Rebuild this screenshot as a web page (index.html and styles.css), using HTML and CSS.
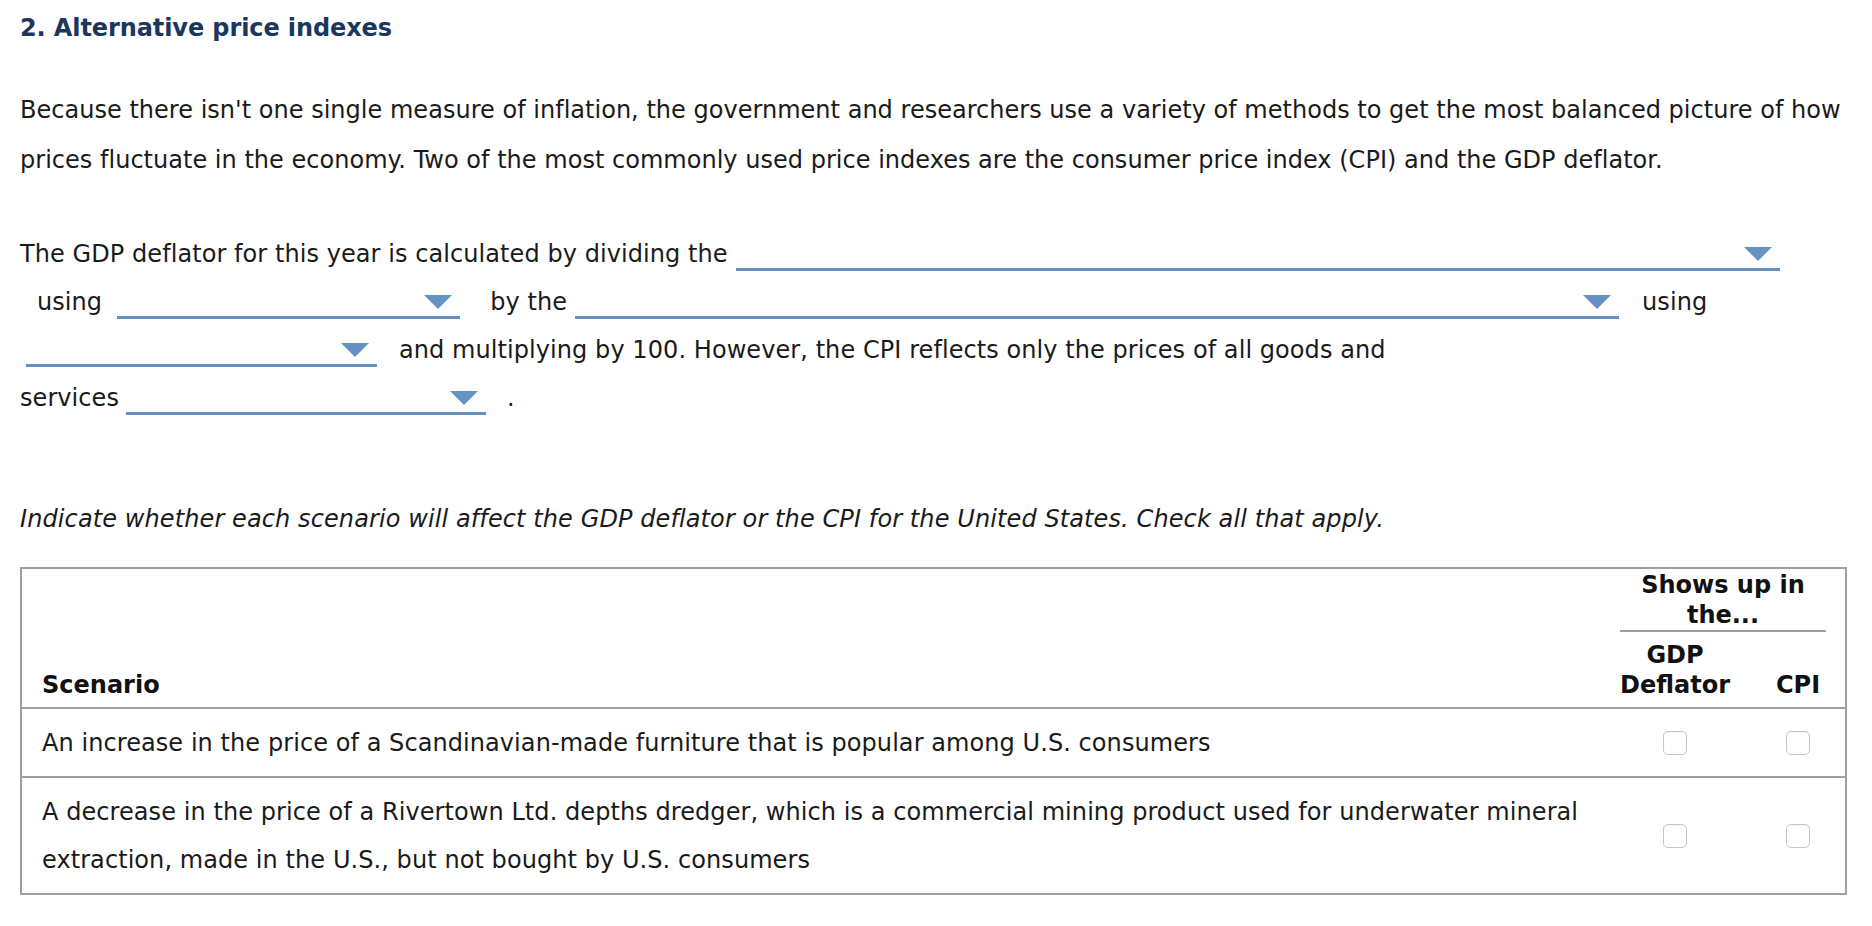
FILE: index.html
```html
<!DOCTYPE html>
<html lang="en">
<head>
<meta charset="utf-8">
<title>Alternative price indexes</title>
<link rel="stylesheet" href="styles.css">
</head>
<body>
<div class="page">
  <h2 class="title">2. Alternative price indexes</h2>
  <p class="intro">Because there isn't one single measure of inflation, the government and researchers use a variety of methods to get the most balanced picture of how prices fluctuate in the economy. Two of the most commonly used price indexes are the consumer price index (CPI) and the GDP deflator.</p>

  <div class="fill">
    <div class="fill-row">
      <span class="txt">The GDP deflator for this year is calculated by dividing the</span>
      <span class="dd dd-1"><span class="arrow"></span></span>
    </div>
    <div class="fill-row row-indent">
      <span class="txt">using</span>
      <span class="dd dd-2"><span class="arrow"></span></span>
      <span class="txt">by the</span>
      <span class="dd dd-3"><span class="arrow"></span></span>
      <span class="txt">using</span>
    </div>
    <div class="fill-row">
      <span class="dd dd-4"><span class="arrow"></span></span>
      <span class="txt">and multiplying by 100. However, the CPI reflects only the prices of all goods and</span>
    </div>
    <div class="fill-row">
      <span class="txt">services</span>
      <span class="dd dd-5"><span class="arrow"></span></span>
      <span class="txt">.</span>
    </div>
  </div>

  <p class="instruct">Indicate whether each scenario will affect the GDP deflator or the CPI for the United States. Check all that apply.</p>

  <div class="qtable">
    <div class="thead">
      <div class="th-scenario">Scenario</div>
      <div class="th-group">
        <div class="th-group-title">Shows up in the...</div>
        <div class="th-cols">
          <div class="th-col">GDP Deflator</div>
          <div class="th-col">CPI</div>
        </div>
      </div>
    </div>
    <div class="trow">
      <div class="td-text">An increase in the price of a Scandinavian-made furniture that is popular among U.S. consumers</div>
      <div class="td-check"><span class="checkbox"></span></div>
      <div class="td-check"><span class="checkbox"></span></div>
    </div>
    <div class="trow">
      <div class="td-text">A decrease in the price of a Rivertown Ltd. depths dredger, which is a commercial mining product used for underwater mineral extraction, made in the U.S., but not bought by U.S. consumers</div>
      <div class="td-check"><span class="checkbox"></span></div>
      <div class="td-check"><span class="checkbox"></span></div>
    </div>
  </div>
</div>
</body>
</html>
```

FILE: styles.css
```css
html, body {
  margin: 0;
  padding: 0;
  background: #ffffff;
}

body {
  font-family: "DejaVu Sans", Verdana, sans-serif;
  font-size: 24px;
  color: #1a1a1a;
  letter-spacing: 0.07px;
}

.page {
  padding: 10px 25px 0 20px;
}

.title {
  margin: 0;
  font-size: 24px;
  line-height: 36px;
  font-weight: bold;
  letter-spacing: -0.1px;
  color: #1c375e;
}

.intro {
  margin: 39px 0 0 0;
  line-height: 50px;
  letter-spacing: 0.02px;
}

.fill {
  margin-top: 45px;
}

.fill-row {
  display: flex;
  align-items: flex-start;
  height: 48px;
}

.txt {
  line-height: 48px;
  white-space: nowrap;
}

.row-indent {
  padding-left: 17px;
}

.dd {
  display: flex;
  justify-content: flex-end;
  align-items: center;
  box-sizing: border-box;
  height: 35px;
  margin-top: 6px;
  padding: 3px 8px 0 0;
  border-bottom: 3px solid #6592c3;
  margin-left: 8px;
  margin-right: 22px;
}

.arrow {
  width: 0;
  height: 0;
  border-left: 14px solid transparent;
  border-right: 14px solid transparent;
  border-top: 14px solid #6592c3;
}

.dd-1 { width: 1044px; margin-right: 0; }
.dd-2 { width: 343px; margin-left: 15px; margin-right: 30px; }
.dd-3 { width: 1044px; margin-right: 23px; }
.dd-4 { width: 351px; margin-left: 6px; margin-right: 22px; }
.dd-5 { width: 360px; margin-left: 7px; margin-right: 21px; }

.instruct {
  margin: 73px 0 0 0;
  line-height: 48px;
  font-style: italic;
  letter-spacing: 0.1px;
}

.qtable {
  margin-top: 24px;
  border: 2px solid #a0a0a0;
}

.thead,
.trow {
  display: grid;
  grid-template-columns: 1fr 120px 94px;
  column-gap: 16px;
}

.thead {
  height: 138px;
  box-sizing: border-box;
  padding-bottom: 7px;
  font-weight: bold;
  line-height: 30px;
  letter-spacing: 0;
  color: #111;
}

.th-scenario {
  align-self: end;
  padding-left: 20px;
}

.th-group {
  grid-column: 2 / 4;
  display: flex;
  flex-direction: column;
  justify-content: flex-end;
}

.th-group-title {
  width: 206px;
  margin-left: 5px;
  text-align: center;
  border-bottom: 2px solid #a0a0a0;
}

.th-cols {
  display: grid;
  grid-template-columns: 120px 94px;
  column-gap: 16px;
  margin-top: 8px;
}

.th-col {
  text-align: center;
  align-self: end;
}

.trow {
  border-top: 2px solid #a0a0a0;
}

.td-text {
  padding: 10px 0 9px 20px;
  line-height: 48px;
}

.td-check {
  display: flex;
  justify-content: center;
  align-items: center;
}

.checkbox {
  display: block;
  width: 24px;
  height: 24px;
  box-sizing: border-box;
  border: 1px solid #c6c6c6;
  border-radius: 5px;
  background: #ffffff;
  box-shadow: inset 0 1px 1px rgba(0, 0, 0, 0.04);
}
```
